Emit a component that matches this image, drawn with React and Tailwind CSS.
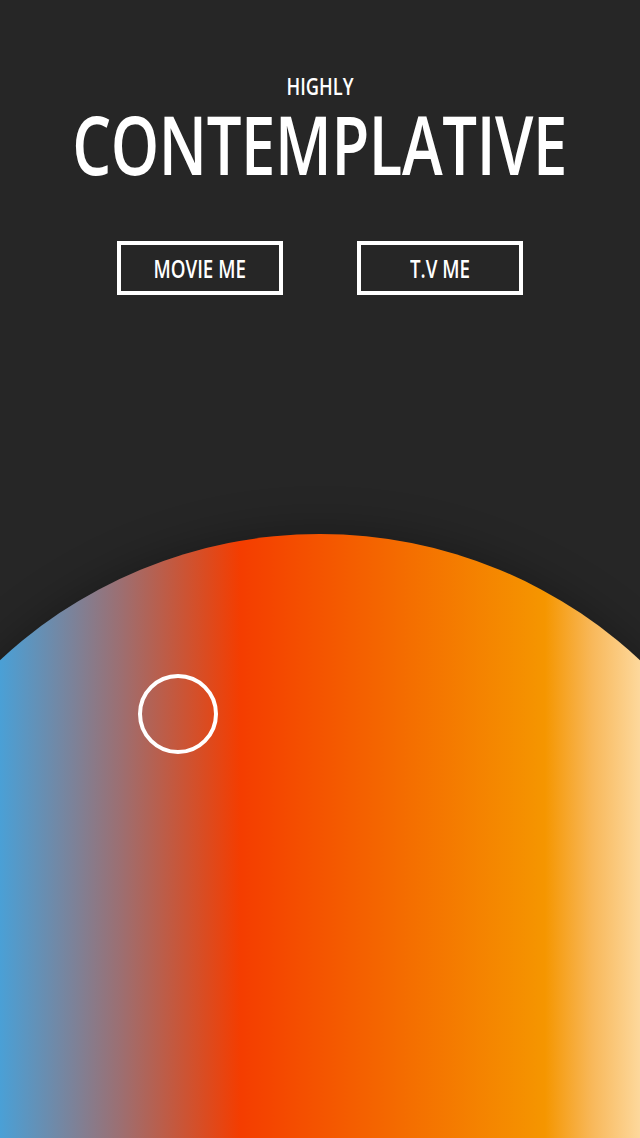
const condensed = 'inline-block origin-center whitespace-nowrap font-semibold leading-none';

const App = () => {
    return (
        <div
            className="h-[1138px] w-full overflow-hidden bg-[#262626] text-white flex flex-col items-center"
            style={{ fontFamily: '"Open Sans", "Noto Sans", sans-serif' }}
        >
            {/* Heading */}
            <div className="pt-[74px] flex flex-col items-center">
                <span className={`${condensed} scale-x-[0.76] text-[24px]`}>HIGHLY</span>
                <h1 className={`${condensed} scale-x-[0.76] mt-[5px] text-[81px] tracking-[-0.5px]`}>
                    CONTEMPLATIVE
                </h1>
            </div>

            {/* Buttons */}
            <div className="mt-[57px] flex gap-[74px]">
                {['MOVIE ME', 'T.V ME'].map((label) => (
                    <button
                        key={label}
                        className="w-[166px] h-[54px] border-4 border-white flex items-center justify-center"
                    >
                        <span className={`${condensed} scale-x-[0.75] text-[25px]`}>{label}</span>
                    </button>
                ))}
            </div>

            {/* Mood sphere */}
            <div className="mt-[239px] w-full flex justify-center">
                <div className="relative shrink-0 w-[938px] h-[938px] rounded-full shadow-[0_-6px_40px_rgba(0,0,0,0.25)] bg-[linear-gradient(90deg,#4aa0d6_15.9%,#9c6f72_28.7%,#f43d00_41.5%,#f46a00_58%,#f59600_74%,#f8b85a_79%,#fdd89c_84.1%)]">
                    <div className="absolute left-[287px] top-[140px] w-[80px] h-[80px] rounded-full border-4 border-white" />
                </div>
            </div>
        </div>
    );
};

export default App;
